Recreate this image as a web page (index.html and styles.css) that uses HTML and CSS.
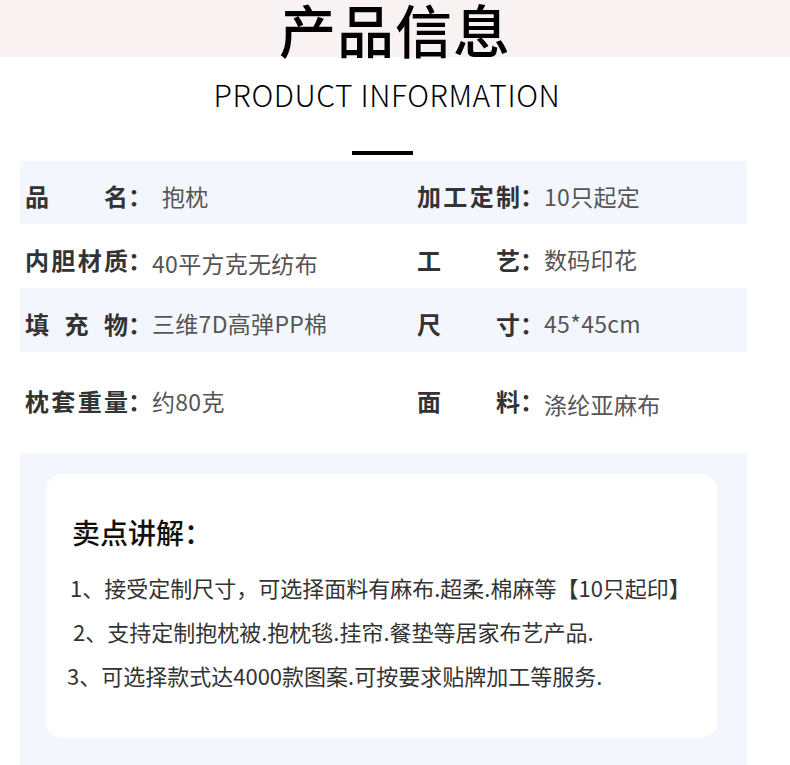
FILE: index.html
```html
<!DOCTYPE html>
<html lang="zh-CN">
<head>
<meta charset="UTF-8" />
<meta name="viewport" content="width=device-width, initial-scale=1" />
<title>产品信息</title>
<link rel="stylesheet" href="styles.css">
</head>
<body>
<header class="banner">
  <h1>产品信息</h1>
</header>
<h2 class="subtitle">PRODUCT INFORMATION</h2>
<div class="bar"></div>

<div class="specs">
  <div class="row shade">
    <div class="cell"><span class="key">品名</span><span class="colon">：</span><span class="val wide">抱枕</span></div>
    <div class="cell"><span class="key">加工定制</span><span class="colon">：</span><span class="val">10只起定</span></div>
  </div>
  <div class="row">
    <div class="cell"><span class="key">内胆材质</span><span class="colon">：</span><span class="val low">40平方克无纺布</span></div>
    <div class="cell"><span class="key">工艺</span><span class="colon">：</span><span class="val">数码印花</span></div>
  </div>
  <div class="row shade">
    <div class="cell"><span class="key">填充物</span><span class="colon">：</span><span class="val">三维7D高弹PP棉</span></div>
    <div class="cell"><span class="key">尺寸</span><span class="colon">：</span><span class="val">45*45cm</span></div>
  </div>
  <div class="row tall">
    <div class="cell"><span class="key">枕套重量</span><span class="colon">：</span><span class="val">约80克</span></div>
    <div class="cell"><span class="key">面料</span><span class="colon">：</span><span class="val low">涤纶亚麻布</span></div>
  </div>
</div>

<section class="points">
  <div class="card">
    <h3>卖点讲解：</h3>
    <ul>
      <li>1、接受定制尺寸，可选择面料有麻布.超柔.棉麻等【10只起印】</li>
      <li>2、支持定制抱枕被.抱枕毯.挂帘.餐垫等居家布艺产品.</li>
      <li>3、可选择款式达4000款图案.可按要求贴牌加工等服务.</li>
    </ul>
  </div>
</section>
</body>
</html>
```

FILE: styles.css
```css
body {
  margin: 0;
  background: #fff;
  color: #333;
  font-family: "Noto Sans CJK SC", "Noto Sans", sans-serif;
  overflow: hidden;
}
.banner {
  background: #f8f2f2;
  height: 57px;
  text-align: center;
}
.banner h1 {
  margin: 0;
  font-size: 57px;
  font-weight: 500;
  line-height: 57px;
  color: #000;
  letter-spacing: 1px;
}
.subtitle {
  margin: 15px 0 0;
  padding-right: 16px;
  font-size: 30px;
  font-weight: 300;
  line-height: 44px;
  letter-spacing: 0.6px;
  color: #000;
  text-align: center;
}
.bar {
  width: 61px;
  height: 4px;
  background: #000;
  margin: 35px auto 6px 352px;
}
.specs {
  margin: 0 43px 0 20px;
}
.row {
  display: grid;
  grid-template-columns: 392px 1fr;
  height: 63px;
  padding-top: 6px;
  box-sizing: border-box;
}
.row + .row {
  height: 64px;
}
.row.shade {
  background: #f4f6fe;
}
.row.tall {
  height: 101px;
  padding-top: 0;
  padding-bottom: 4px;
}
.cell {
  display: flex;
  align-items: center;
  padding-left: 5px;
}
.key {
  display: inline-block;
  width: 103px;
  font-size: 24px;
  font-weight: 700;
  color: #333;
  text-align: justify;
  text-align-last: justify;
}
.colon {
  display: inline-block;
  width: 24px;
  font-size: 24px;
  font-weight: 700;
  color: #333;
}
.val {
  font-size: 23px;
  color: #555;
  letter-spacing: 0.3px;
}
.val.wide {
  padding-left: 10px;
}
.val.low {
  padding-top: 7px;
}
.points {
  margin: 0 43px 0 20px;
  background: #f4f6fe;
  padding: 21px 30px 40px 26px;
}
.card {
  background: #fff;
  border-radius: 16px;
  height: 264px;
  box-sizing: border-box;
  padding: 40px 20px 0 26px;
}
.card h3 {
  margin: 0 0 15px;
  font-size: 28px;
  font-weight: 500;
  line-height: 36px;
  color: #111;
}
.card ul {
  list-style: none;
  margin: 0;
  padding: 0;
}
.card li {
  font-size: 22px;
  line-height: 44px;
  color: #333;
  margin-left: -2px;
  white-space: nowrap;
}
.card li:nth-child(2) {
  margin-left: 1px;
}
.card li:nth-child(3) {
  margin-left: -5px;
}
```
